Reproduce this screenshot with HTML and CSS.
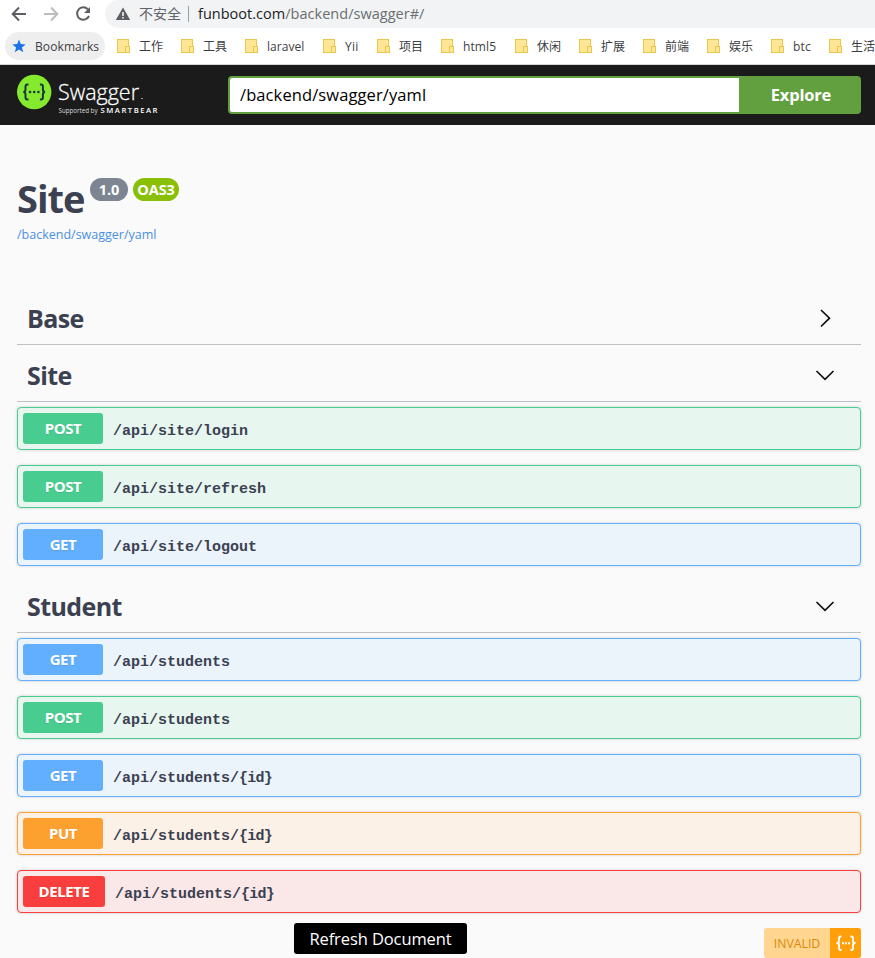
FILE: index.html
```
<!DOCTYPE html>
<html lang="zh-CN">
<head>
<meta charset="utf-8">
<title>Swagger UI</title>
<link rel="stylesheet" href="styles.css">
</head>
<body>
<div class="browser-bar">
  <svg class="nav" width="96" height="28" viewBox="0 0 96 28" fill="none" stroke-width="2">
    <path d="M26 14H13M19 7.5L12.7 14L19 20.5" stroke="#5b5e62"/>
    <path d="M44 14H57M51 7.5L57.3 14L51 20.5" stroke="#babcbe"/>
    <path d="M87.8 9.2A6.2 6.2 0 1 0 89 16" stroke="#5b5e62"/>
    <path d="M90 7v6h-6z" fill="#5b5e62"/>
  </svg>
  <div class="address">
    <svg class="warn" width="16" height="14" viewBox="0 0 16 14"><path d="M8 .5L15.2 13H.8z" fill="#5b5e62"/><path d="M8 5v4M8 10v1.6" stroke="#f1f3f4" stroke-width="1.6"/></svg>
    <span class="insecure">不安全</span>
    <span class="url"><b>funboot.com</b>/backend/swagger#/</span>
  </div>
</div>
<div class="bookmarks">
  <div class="bm-main"><svg width="14" height="14" viewBox="0 0 14 14"><path d="M7 .5l1.8 4.6 4.9.3-3.8 3.1 1.3 4.8L7 10.6l-4.2 2.7 1.3-4.8L.3 5.4l4.9-.3z" fill="#1a73e8"/></svg><span>Bookmarks</span></div>
  <div class="bm"><i></i>工作</div>
  <div class="bm"><i></i>工具</div>
  <div class="bm laravel"><i></i>laravel</div>
  <div class="bm yii"><i></i>Yii</div>
  <div class="bm"><i></i>项目</div>
  <div class="bm html5"><i></i>html5</div>
  <div class="bm"><i></i>休闲</div>
  <div class="bm"><i></i>扩展</div>
  <div class="bm"><i></i>前端</div>
  <div class="bm"><i></i>娱乐</div>
  <div class="bm btc"><i></i>btc</div>
  <div class="bm"><i></i>生活</div>
</div>
<header class="topbar">
  <svg class="logo" width="145" height="44" viewBox="0 0 145 44">
    <circle cx="17.2" cy="19" r="17.2" fill="#85ea2d"/>
    <g fill="none" stroke="#173647" stroke-width="2">
      <path d="M11.5 11.5H10.5Q8.5 11.5 8.5 13.5V16.5Q8.5 19 6.3 19Q8.5 19 8.5 21.5V24.5Q8.5 26.5 10.5 26.5H11.5"/>
      <path d="M22.9 11.5H23.9Q25.9 11.5 25.9 13.5V16.5Q25.9 19 28.1 19Q25.9 19 25.9 21.5V24.5Q25.9 26.5 23.9 26.5H22.9"/>
    </g>
    <g fill="#173647"><circle cx="13" cy="19" r="1.3"/><circle cx="17.2" cy="19" r="1.3"/><circle cx="21.4" cy="19" r="1.3"/></g>
    <text class="brand" x="41" y="26.5" textLength="81" lengthAdjust="spacingAndGlyphs">Swagger</text>
    <rect x="124" y="25" width="2" height="1" fill="#999"/>
    <text class="support" x="41.5" y="40" textLength="39" lengthAdjust="spacingAndGlyphs">Supported by</text>
    <text class="smart" x="83.5" y="40" textLength="57" lengthAdjust="spacing">SMARTBEAR</text>
  </svg>
  <div class="search"><div class="input">/backend/swagger/yaml</div><div class="explore">Explore</div></div>
</header>
<main>
  <div class="info">
    <div class="title"><h1>Site</h1><span class="version">1.0</span><span class="version oas">OAS3</span></div>
    <a class="spec">/backend/swagger/yaml</a>
  </div>
  <section>
    <h2>Base<svg width="20" height="20" viewBox="0 0 20 20"><path d="M6 2l8.5 8.2L6 18.5"/></svg></h2>
  </section>
  <section class="open">
    <h2>Site<svg width="20" height="20" viewBox="0 0 20 20"><path d="M1.5 6l8.5 8.3L18.5 6"/></svg></h2>
    <div class="op post"><span class="method">POST</span><span class="path">/api/site/login</span></div>
    <div class="op post"><span class="method">POST</span><span class="path">/api/site/refresh</span></div>
    <div class="op get"><span class="method">GET</span><span class="path">/api/site/logout</span></div>
  </section>
  <section class="open">
    <h2>Student<svg width="20" height="20" viewBox="0 0 20 20"><path d="M1.5 6l8.5 8.3L18.5 6"/></svg></h2>
    <div class="op get"><span class="method">GET</span><span class="path">/api/students</span></div>
    <div class="op post"><span class="method">POST</span><span class="path">/api/students</span></div>
    <div class="op get"><span class="method">GET</span><span class="path">/api/students/<span class="param">{id}</span></span></div>
    <div class="op put"><span class="method">PUT</span><span class="path">/api/students/<span class="param">{id}</span></span></div>
    <div class="op delete"><span class="method">DELETE</span><span class="path">/api/students/<span class="param">{id}</span></span></div>
  </section>
</main>
<footer>
  <div class="refresh">Refresh Document</div>
  <div class="badge"><span>INVALID</span>
    <svg width="31" height="30" viewBox="0 0 31 30"><g fill="none" stroke="#fff" stroke-width="1.9"><path d="M11.5 8.5H10.5Q9 8.5 9 10.5V13Q9 15 6.5 15Q9 15 9 17V20Q9 22 10.5 22H11.5"/><path d="M20.5 8.5H21.5Q23 8.5 23 10.5V13Q23 15 25.5 15Q23 15 23 17V20Q23 22 21.5 22H20.5"/></g><path d="M12 14.2h2v2h-2zM15 14.2h2v2h-2zM18 14.2h2v2h-2z" fill="#fff"/></svg>
  </div>
</footer>
</body>
</html>
```
FILE: styles.css
```
* { box-sizing: border-box; }
body {
  margin: 0;
  width: 875px;
  height: 958px;
  overflow: hidden;
  background: #fafafa;
  color: #3b4151;
  font-family: "Open Sans", "Noto Sans CJK SC", sans-serif;
}
.browser-bar { display: flex; height: 28px; background: #fff; }
.nav { flex: none; margin-right: 9px; }
.address {
  flex: 1;
  display: flex;
  align-items: center;
  padding-left: 10px;
  background: #f1f3f4;
  border-radius: 14px 0 0 14px;
  font-size: 14px;
  line-height: 28px;
  white-space: nowrap;
}
.warn { margin-right: 8px; }
.insecure {
  width: 50px;
  color: #5f6368;
  line-height: 16px;
  border-right: 1px solid #9a9da0;
  margin-right: 9px;
}
.url { color: #6b6e72; font-size: 14.5px; letter-spacing: 0.02px; }
.url b { font-weight: 400; color: #202124; }
.bookmarks {
  display: flex;
  align-items: center;
  height: 37px;
  padding-left: 5px;
  background: #fff;
  border-bottom: 1px solid #d5d5d5;
  font-size: 12px;
  color: #3c4043;
}
.bm-main {
  flex: none;
  display: flex;
  align-items: center;
  gap: 9px;
  width: 100px;
  height: 28px;
  padding-left: 7px;
  margin-right: 12px;
  border-radius: 14px;
  background: #eee;
  letter-spacing: 0.1px;
}
.bm { flex: none; display: flex; align-items: center; width: 64px; white-space: nowrap; }
.bm i {
  position: relative;
  width: 12px;
  height: 14px;
  margin-right: 10px;
  background: #ffe694;
  border: 1px solid #eac54f;
}
.bm i::after {
  content: "";
  position: absolute;
  right: -2px;
  bottom: -1px;
  width: 3px;
  height: 5px;
  background: #ffe694;
  border: 1px solid #eac54f;
}
.laravel { width: 78px; letter-spacing: 0.05px; }
.yii { width: 54px; letter-spacing: 0.2px; }
.html5 { width: 74px; letter-spacing: 0.1px; }
.btc { width: 58px; letter-spacing: 0.2px; }
.topbar {
  display: flex;
  align-items: center;
  height: 60px;
  padding: 0 14px 0 17px;
  background: #1b1b1b;
}
.logo { flex: none; margin: 0 66px 0 0; overflow: visible; }
.logo text { fill: #fff; }
.brand { font-size: 22.5px; font-weight: 300; stroke: #fff; stroke-width: 0.3px; }
.logo .support { font-size: 6.5px; fill: #ddd; }
.smart { font-size: 7.7px; font-weight: 600; }
.search {
  flex: 1;
  display: flex;
  height: 38px;
  background: #62a03f;
  border: 2px solid #62a03f;
  border-radius: 4px;
}
.input {
  flex: 1;
  padding-left: 10px;
  background: #fff;
  color: #000;
  border-radius: 2px 0 0 2px;
  font-size: 16.5px;
  letter-spacing: 0.1px;
  line-height: 34px;
}
.explore {
  width: 120px;
  padding-left: 4px;
  color: #fff;
  font-size: 16.5px;
  letter-spacing: -0.2px;
  font-weight: 700;
  line-height: 34px;
  text-align: center;
}
main { padding: 0 14px 0 17px; }
.info { height: 170px; padding-top: 50px; }
.title { display: flex; gap: 5px; height: 50px; }
h1 { width: 68px; margin: 0; font-size: 38px; letter-spacing: -1px; line-height: 47px; font-weight: 700; }
.version {
  width: 38px;
  height: 23px;
  margin-top: 3px;
  border-radius: 12px;
  background: #7d8492;
  color: #fff;
  font-size: 14.5px;
  letter-spacing: -0.1px;
  font-weight: 700;
  line-height: 23px;
  text-align: center;
}
.oas { width: 46px; background: #89bf04; }
.spec { display: block; color: #4990e2; font-size: 12.5px; line-height: 20px; }
h2 {
  display: flex;
  justify-content: space-between;
  align-items: center;
  height: 50px;
  margin: 0;
  padding: 0 26px 4px 10px;
  border-bottom: 1px solid #bfc0c4;
  font-size: 25px;
  letter-spacing: -0.6px;
  line-height: 30px;
}
h2 svg { fill: none; stroke: #111; stroke-width: 1.7; }
.open { padding-top: 7px; }
.open h2 { margin-bottom: 5px; }
.open + .open { padding-top: 8px; }
.op {
  display: flex;
  align-items: center;
  height: 43px;
  margin-bottom: 15px;
  padding-left: 5px;
  border: 1px solid;
  border-radius: 4px;
  box-shadow: 0 0 3px rgba(0, 0, 0, 0.19);
}
.open .op:last-child { margin-bottom: 9px; }
.method {
  width: 80px;
  height: 31px;
  border-radius: 3px;
  color: #fff;
  font-size: 15px;
  letter-spacing: -0.4px;
  font-weight: 700;
  line-height: 30px;
  text-align: center;
  text-shadow: 0 1px 0 rgba(0, 0, 0, 0.1);
}
.path {
  padding: 6px 0 0 10px;
  font-family: "Liberation Mono", monospace;
  font-size: 15px;
  font-weight: 700;
  line-height: 20px;
}
.param { letter-spacing: -0.8px; }
.post { border-color: #49cc90; background: #e8f6f0; }
.post .method { background: #49cc90; }
.get { border-color: #61affe; background: #ebf3fb; }
.get .method { background: #61affe; }
.put { border-color: #fca130; background: #fbf1e6; }
.put .method { background: #fca130; }
.delete { border-color: #f93e3e; background: #fae7e7; }
.delete .method { width: 82px; background: #f93e3e; }
footer { display: flex; padding: 1px 14px 0 294px; justify-content: space-between; }
.refresh {
  width: 173px;
  height: 31px;
  border-radius: 3px;
  background: #000;
  color: #fff;
  font-size: 16.5px;
  letter-spacing: -0.1px;
  line-height: 32px;
  text-align: center;
}
.badge { display: flex; width: 97px; height: 30px; margin-top: 5px; border-radius: 3px; overflow: hidden; background: #ffd58f; }
.badge span { width: 66px; color: #d98a0a; font-size: 12.3px; line-height: 31px; text-align: center; font-weight: 500; }
.badge svg { background: #ffa00a; }
```
